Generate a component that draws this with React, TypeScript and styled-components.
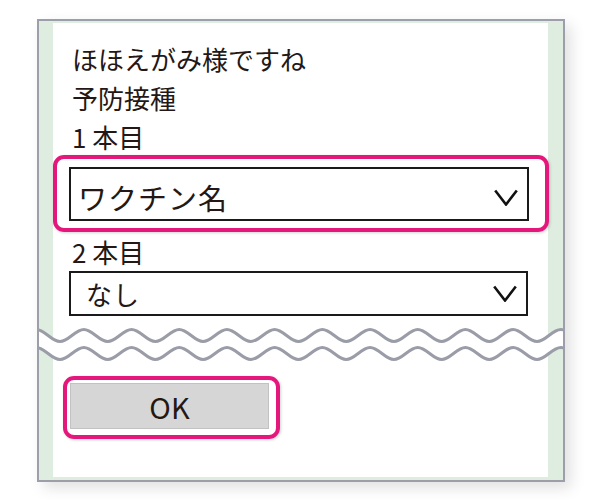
import React from "react";
import styled, { createGlobalStyle } from "styled-components";

const GlobalStyle = createGlobalStyle`
  body {
    margin: 0;
    background: #ffffff;
    font-family: "Noto Sans CJK JP", "Noto Sans", sans-serif;
    color: #231815;
  }
`;

const INK = "#231815";
const PINK = "#e4187c";
const GREEN = "#deede0";
const FRAME = "#9c9ea9";

const Page = styled.div`
  padding: 19px 0 0 37px;
  width: 600px;
  height: 500px;
  box-sizing: border-box;
`;

// 外枠（グレーの線＋薄い緑の余白）
const Frame = styled.div`
  width: 528px;
  height: 463px;
  box-sizing: border-box;
  border: 2px solid ${FRAME};
  background: ${GREEN};
  padding: 2px 15px 3px 14px;
  box-shadow: 6px 6px 14px rgba(0, 0, 0, 0.12);
  display: flex;
  flex-direction: column;
`;

const Panel = styled.div<{ $grow?: boolean }>`
  background: #ffffff;
  flex: ${(p) => (p.$grow ? 1 : "none")};
`;

const TopPanel = styled(Panel)`
  padding: 16px 0 11px;
`;

const BottomPanel = styled(Panel)`
  padding: 14px 0 0 10px;
`;

const Label = styled.div`
  font-size: 26px;
  line-height: 39px;
  padding-left: 19px;
`;

const Highlight = styled.div<{ $inline?: boolean }>`
  border: 4px solid ${PINK};
  border-radius: 11px;
  box-shadow: 1px 1px 3px rgba(0, 0, 0, 0.18);
  display: ${(p) => (p.$inline ? "inline-block" : "block")};
`;

const SelectHighlight = styled(Highlight)`
  margin: -1px -1px 0 0;
  padding: 8px 16px 7px 12px;
`;

const ButtonHighlight = styled(Highlight)`
  padding: 3px 7px 6px 3px;
`;

const Select = styled.div<{ $h: number; $shift?: number; $indent?: number }>`
  height: ${(p) => p.$h}px;
  box-sizing: border-box;
  border: 2px solid #1a1a1a;
  background: #ffffff;
  display: flex;
  align-items: center;
  justify-content: space-between;
  padding: ${(p) => p.$shift ?? 0}px 9px 0 ${(p) => p.$indent ?? 7}px;
`;

const SelectSlot = styled.div`
  margin: 0 20px 0 16px;
`;

const SelectText = styled.span<{ $size: number }>`
  font-size: ${(p) => p.$size}px;
  letter-spacing: 1px;
  line-height: 1;
`;

const Chevron = () => (
  <svg width="24" height="17" viewBox="0 0 24 17">
    <polyline
      points="1.2,1.5 12,15.5 22.8,1.5"
      fill="none"
      stroke="#111"
      strokeWidth="2.6"
    />
  </svg>
);

const OkButton = styled.button`
  width: 199px;
  height: 46px;
  box-sizing: border-box;
  background: #d6d6d6;
  border: 1px solid #c2c2c2;
  font-family: "Noto Sans CJK JP", "Noto Sans", sans-serif;
  font-size: 29px;
  color: ${INK};
  padding: 0;
  display: block;
`;

// 省略を示す波線
const WaveBreak = styled.div`
  height: 35px;
  margin: 0 -15px 0 -14px;
  background: linear-gradient(
    to right,
    ${GREEN} 14px,
    #ffffff 14px,
    #ffffff calc(100% - 15px),
    ${GREEN} calc(100% - 15px)
  );
  svg {
    display: block;
  }
`;

const PERIOD = 47.7;
const AMP = 12;

// 谷→山→谷 をなめらかにつなぐ
function halfWaves(start: number, trough: number, count: number, dir: 1 | -1) {
  let d = "";
  const h = PERIOD / 2;
  const k = h * 0.36;
  for (let i = 0; i < count * 2; i++) {
    const x0 = start + dir * i * h;
    const x1 = x0 + dir * h;
    const y0 = i % 2 === 0 ? trough : trough - AMP;
    const y1 = i % 2 === 0 ? trough - AMP : trough;
    d += ` C ${x0 + dir * k} ${y0} ${x1 - dir * k} ${y1} ${x1} ${y1}`;
  }
  return d;
}

const Wave = () => {
  const start = 21 - PERIOD;
  const n = 13;
  const end = start + n * PERIOD;
  const top = `M ${start} 14.5` + halfWaves(start, 14.5, n, 1);
  const bottom = `M ${start} 32.5` + halfWaves(start, 32.5, n, 1);
  const fill = top + ` L ${end} 32.5` + halfWaves(end, 32.5, n, -1) + " Z";
  return (
    <svg width="524" height="35" viewBox="0 0 524 35">
      <path d={fill} fill="#ffffff" />
      <path d={top} fill="none" stroke="#9a9ca8" strokeWidth="3" />
      <path d={bottom} fill="none" stroke="#9a9ca8" strokeWidth="3" />
    </svg>
  );
};

export default function App() {
  return (
    <Page>
      <GlobalStyle />
      <Frame>
        <TopPanel>
          <Label>ほほえがみ様ですね</Label>
          <Label>予防接種</Label>
          <Label>1 本目</Label>
          <SelectHighlight>
            <Select $h={54} $shift={6}>
              <SelectText $size={29}>ワクチン名</SelectText>
              <Chevron />
            </Select>
          </SelectHighlight>
          <Label>2 本目</Label>
          <SelectSlot>
            <Select $h={45} $indent={15}>
              <SelectText $size={26}>なし</SelectText>
              <Chevron />
            </Select>
          </SelectSlot>
        </TopPanel>
        <WaveBreak>
          <Wave />
        </WaveBreak>
        <BottomPanel $grow>
          <ButtonHighlight $inline>
            <OkButton>OK</OkButton>
          </ButtonHighlight>
        </BottomPanel>
      </Frame>
    </Page>
  );
}
